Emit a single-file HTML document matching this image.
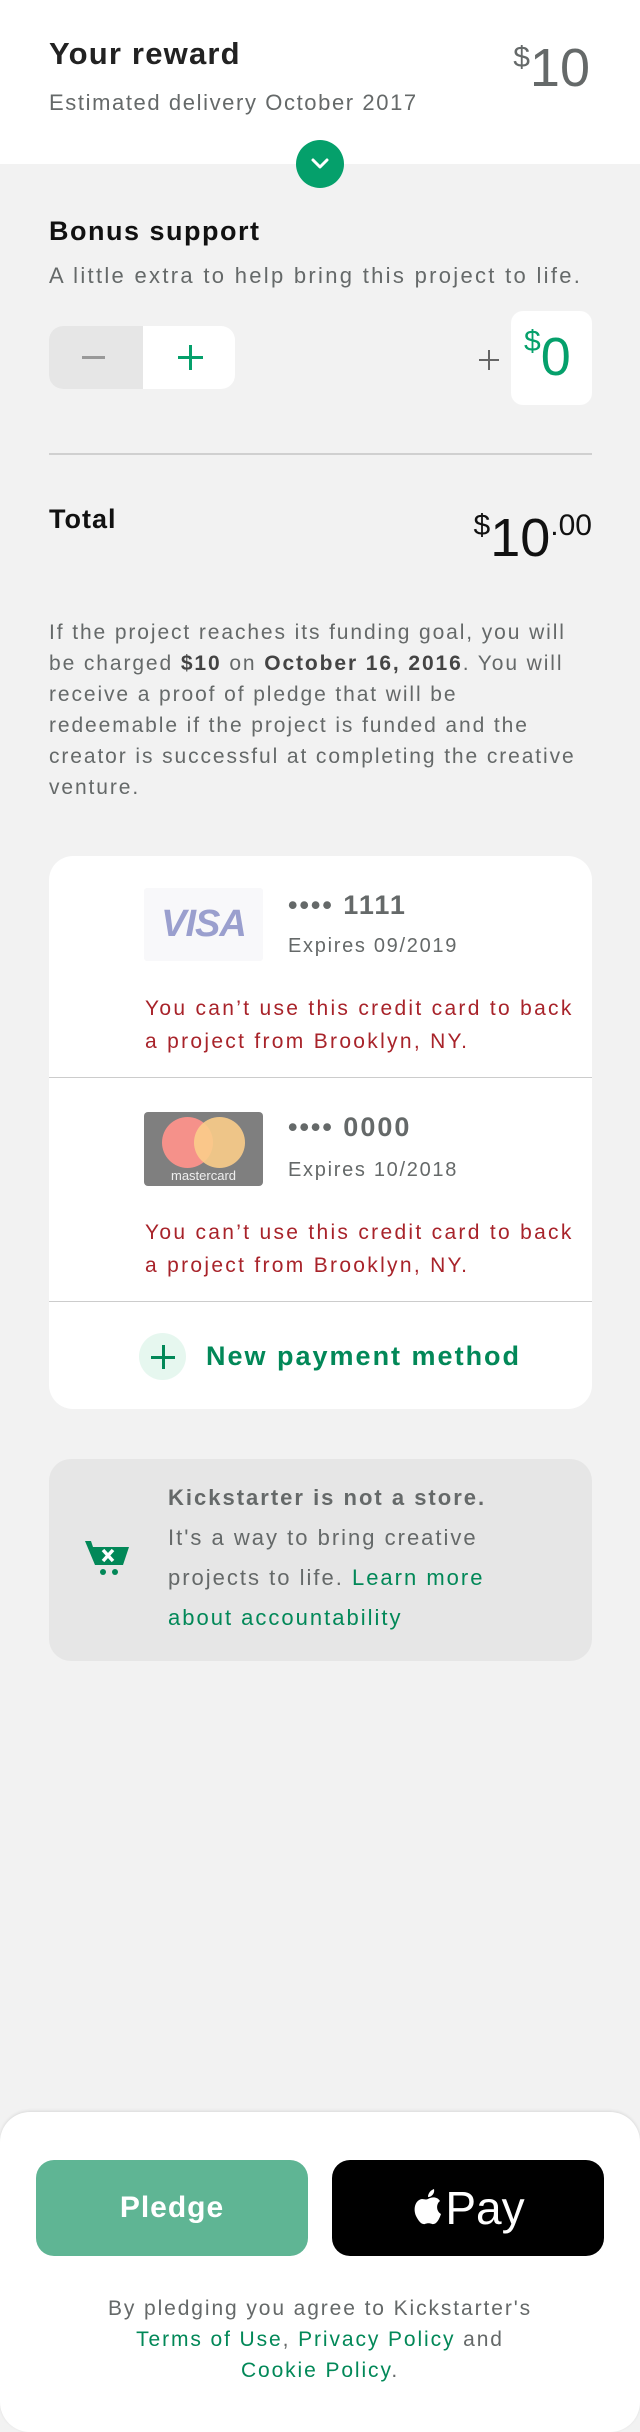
<!DOCTYPE html>
<html><head><meta charset="utf-8"><style>
*{margin:0;padding:0;box-sizing:border-box}
body{width:640px;height:2400px;background:#f2f2f2;font-family:"Liberation Sans",sans-serif;position:relative;overflow:hidden;color:#222}
.a{position:absolute}
.g{color:#656969}
.green{color:#028858}
.red{color:#a8232a}
</style></head><body>
<div class="a" style="left:0;top:0;width:640px;height:164px;background:#fff"></div>
<div class="a" style="left:49px;top:36px;font-size:31px;font-weight:bold;color:#222;letter-spacing:1.2px">Your reward</div>
<div class="a g" style="left:49px;top:90px;font-size:22px;letter-spacing:1.6px">Estimated delivery October 2017</div>
<div class="a g" style="right:50px;top:38px;font-size:54px;line-height:60px"><span style="font-size:30px;vertical-align:top;line-height:40px">$</span>10</div>
<div class="a" style="left:296px;top:140px;width:48px;height:48px;border-radius:50%;background:#05a06b"></div>
<svg class="a" style="left:308px;top:154px" width="24" height="20" viewBox="0 0 24 20"><path d="M5 6 L12 13 L19 6" stroke="#fff" stroke-width="3" fill="none" stroke-linecap="round" stroke-linejoin="round"/></svg>

<div class="a" style="left:49px;top:216px;font-size:27px;font-weight:bold;color:#111;letter-spacing:1.5px">Bonus support</div>
<div class="a g" style="left:49px;top:263px;font-size:22px;letter-spacing:2.3px">A little extra to help bring this project to life.</div>
<div class="a" style="left:49px;top:326px;width:186px;height:63px;border-radius:14px;background:#fff;overflow:hidden">
 <div style="position:absolute;left:0;top:0;width:94px;height:63px;background:#e6e6e6"></div>
 <div style="position:absolute;left:33px;top:30px;width:23px;height:3px;background:#999"></div>
 <div style="position:absolute;left:129px;top:30px;width:25px;height:3px;background:#05a06b"></div>
 <div style="position:absolute;left:140px;top:19px;width:3px;height:25px;background:#05a06b"></div>
</div>
<div class="a" style="left:479px;top:359px;width:20px;height:2px;background:#666"></div>
<div class="a" style="left:488px;top:350px;width:2px;height:20px;background:#666"></div>
<div class="a" style="left:511px;top:311px;width:81px;height:94px;border-radius:12px;background:#fff"></div>
<div class="a" style="left:524px;top:322px;font-size:54px;line-height:70px;color:#05a06b"><span style="font-size:30px;vertical-align:top;line-height:40px">$</span>0</div>
<div class="a" style="left:49px;top:453px;width:543px;height:2px;background:#d0d0d0"></div>
<div class="a" style="left:49px;top:504px;font-size:27px;font-weight:bold;color:#111;letter-spacing:1px">Total</div>
<div class="a" style="right:48px;top:508px;font-size:54px;line-height:60px;color:#111"><span style="font-size:30px;vertical-align:top;line-height:36px">$</span>10<span style="font-size:30px;vertical-align:top;line-height:36px">.00</span></div>
<div class="a g" style="left:49px;top:617px;width:528px;font-size:21px;line-height:31px;letter-spacing:1.9px">If the project reaches its funding goal, you will be charged <b style="color:#444">$10</b> on <b style="color:#444">October 16, 2016</b>. You will receive a proof of pledge that will be redeemable if the project is funded and the creator is successful at completing the creative venture.</div>

<div class="a" style="left:49px;top:856px;width:543px;height:553px;border-radius:24px;background:#fff"></div>
<div class="a" style="left:144px;top:888px;width:119px;height:73px;background:#f8f8fa;border-radius:3px;font-size:38px;font-weight:bold;font-style:italic;color:#9a9fce;text-align:center;line-height:73px;letter-spacing:-1px">VISA</div>
<div class="a g" style="left:288px;top:890px;font-size:27px;font-weight:bold;letter-spacing:2px">•••• 1111</div>
<div class="a g" style="left:288px;top:935px;font-size:20px;letter-spacing:1.7px">Expires 09/2019</div>
<div class="a red" style="left:145px;top:992px;font-size:21px;line-height:33px;letter-spacing:2.3px">You can’t use this credit card to back<br>a project from Brooklyn, NY.</div>
<div class="a" style="left:49px;top:1077px;width:543px;height:1px;background:#ccc"></div>
<div class="a" style="left:144px;top:1112px;width:119px;height:74px;background:#7f7f7f;border-radius:4px"></div>
<div class="a" style="left:162px;top:1117px;width:51px;height:51px;border-radius:50%;background:#f5918a"></div>
<div class="a" style="left:194px;top:1117px;width:51px;height:51px;border-radius:50%;background:#fbcd8a;opacity:.9"></div>
<div class="a" style="left:144px;top:1168px;width:119px;text-align:center;font-size:13px;color:#eee">mastercard</div>
<div class="a g" style="left:288px;top:1112px;font-size:27px;font-weight:bold;letter-spacing:2px">•••• 0000</div>
<div class="a g" style="left:288px;top:1159px;font-size:20px;letter-spacing:1.7px">Expires 10/2018</div>
<div class="a red" style="left:145px;top:1216px;font-size:21px;line-height:33px;letter-spacing:2.3px">You can’t use this credit card to back<br>a project from Brooklyn, NY.</div>
<div class="a" style="left:49px;top:1301px;width:543px;height:1px;background:#ccc"></div>
<div class="a" style="left:139px;top:1333px;width:47px;height:47px;border-radius:50%;background:#e6f7ef"></div>
<div class="a" style="left:151px;top:1356px;width:24px;height:3px;background:#028858"></div>
<div class="a" style="left:162px;top:1345px;width:3px;height:24px;background:#028858"></div>
<div class="a green" style="left:206px;top:1341px;font-size:27px;font-weight:bold;letter-spacing:2px">New payment method</div>

<div class="a" style="left:49px;top:1459px;width:543px;height:202px;border-radius:22px;background:#e6e6e6"></div>
<svg class="a" style="left:83px;top:1537px" width="48" height="44" viewBox="0 0 48 44"><path d="M2 4 L8 4 L10 10 L46 10 L40 28 L12 28 Z" fill="#028858"/><path d="M20 13 L30 24 M30 13 L20 24" stroke="#fff" stroke-width="3.5"/><circle cx="20" cy="35" r="3" fill="#028858"/><circle cx="32" cy="35" r="3" fill="#028858"/></svg>
<div class="a g" style="left:168px;top:1478px;width:350px;font-size:22px;line-height:40px;letter-spacing:2px"><b>Kickstarter is not a store.</b><br>It's a way to bring creative projects to life. <span class="green">Learn more about accountability</span></div>

<div class="a" style="left:0;top:2112px;width:640px;height:320px;border-radius:30px;background:#fff;box-shadow:0 -1px 3px rgba(0,0,0,.1)"></div>
<div class="a" style="left:36px;top:2160px;width:272px;height:96px;border-radius:18px;background:#5fb594;color:#fff;font-size:30px;font-weight:bold;text-align:center;line-height:96px;letter-spacing:1px">Pledge</div>
<div class="a" style="left:332px;top:2160px;width:272px;height:96px;border-radius:18px;background:#000;color:#fff;font-size:46px;text-align:center;line-height:96px">
<svg width="34" height="40" viewBox="0 0 34 40" style="vertical-align:-4px"><path d="M17 11 C20 9 26 8 29 13 C25 16 25 23 30 26 C28 32 25 37 21 36 C19 35 16 35 14 36 C10 37 7 32 5 28 C2 21 4 12 11 11 C13 11 15 12 17 11Z M17 9 C17 5 20 2 23 1 C24 5 21 9 17 9Z" fill="#fff"/></svg>Pay</div>
<div class="a g" style="left:0;top:2293px;width:640px;text-align:center;font-size:21px;line-height:31px;letter-spacing:1.9px">By pledging you agree to Kickstarter's<br><span class="green">Terms of Use</span>, <span class="green">Privacy Policy</span> and<br><span class="green">Cookie Policy</span>.</div>
</body></html>
